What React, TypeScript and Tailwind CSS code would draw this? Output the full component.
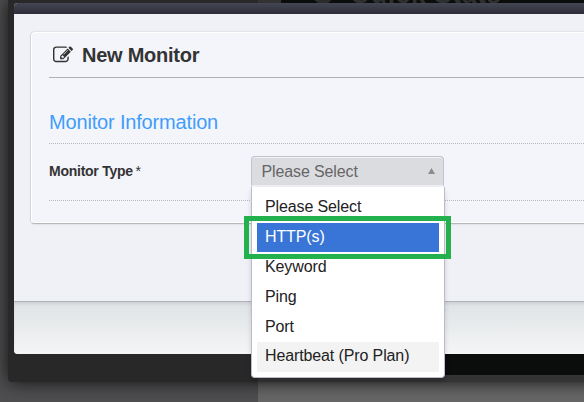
const options = ['Please Select', 'HTTP(s)', 'Keyword', 'Ping', 'Port', 'Heartbeat (Pro Plan)'];

function EditIcon() {
  return (
    <svg viewBox="0 0 1792 1792" className="h-5 w-5 shrink-0" fill="currentColor">
      <path d="M888 1184l116-116-152-152-116 116v56h96v96h56zm440-720q-16-16-33 1l-350 350q-17 17-1 33t33-1l350-350q17-17 1-33zm80 594v190q0 119-84.5 203.5t-203.5 84.5h-832q-119 0-203.5-84.5t-84.5-203.5v-832q0-119 84.5-203.5t203.5-84.5h832q63 0 117 25 15 7 18 23 3 17-9 29l-49 49q-14 14-32 8-23-6-45-6h-832q-66 0-113 47t-47 113v832q0 66 47 113t113 47h832q66 0 113-47t47-113v-126q0-13 9-22l64-64q15-15 35-7t20 29zm-96-738l288 288-672 672h-288v-288zm444 132l-92 92-288-288 92-92q28-28 68-28t68 28l152 152q28 28 28 68t-28 68z" />
    </svg>
  );
}

function Backdrop() {
  return (
    <div className="absolute inset-0 flex">
      <div className="w-[258px] bg-[#4e4e50]" />
      <div className="flex-1 bg-[#666]" />
    </div>
  );
}

function FrameBehind() {
  return (
    <div className="absolute inset-0 overflow-hidden rounded-bl-[4px]">
      <div className="absolute top-0 left-[250px] h-3 w-[23px] bg-[#333]" />
      <div className="absolute top-0 right-0 left-[273px] h-3 overflow-hidden bg-[#0a0d0b]">
        <div className="absolute -top-[18px] left-[31px] h-[22px] w-[22px] rounded-full bg-[#2c2c2c]" />
        <div className="absolute -top-[21px] left-[69px] text-[26px] leading-[30px] font-bold tracking-[0.8px] whitespace-nowrap text-[#303030]">
          Quick Stats
        </div>
      </div>
      <div className="absolute top-[354px] right-0 bottom-[7px] left-[250px] bg-[#0a0d0b]" />
      <div className="absolute right-0 bottom-0 left-[250px] h-[7px] bg-[#333]" />
    </div>
  );
}

function Dropdown() {
  return (
    <div className="absolute top-0 left-0 z-10 w-[194px] text-base leading-[30px] text-[#222]">
      <div className="flex h-[31px] w-[193px] items-center justify-between rounded-t-[4px] border border-b-2 border-[#c2c3cf] border-b-[#eeeff4] bg-[#dbdce0] pr-[8px] pl-[9.5px] text-[#666] shadow-[inset_0_1px_0_#f2f2f5]">
        <span className="relative top-px tracking-[-0.12px]">Please Select</span>
        <svg viewBox="0 0 7 6" className="h-[6px] w-[7px]" fill="#8c8c8c">
          <path d="M3.5 0L7 6H0z" />
        </svg>
      </div>
      <ul className="h-[191px] rounded-b-[4px] border border-t-0 border-[#bbbccb] bg-white px-[5px] pt-[5px] tracking-[-0.12px] shadow-[0_4px_5px_rgba(0,0,0,0.15)]">
        {options.map((o, i) => (
          <li
            key={o}
            className={
              i === 1
                ? 'mt-px h-[29px] bg-[#3875d7] pl-[8px] leading-[27px] text-white'
                : i === 5
                  ? 'h-[30px] bg-[#f3f3f3] pl-[8px] leading-[27px]'
                  : i === 0
                    ? 'h-[30px] pl-[8px] leading-[29px]'
                    : i === 4
                      ? 'h-[30px] pl-[8px] leading-[29px]'
                      : 'h-[30px] pl-[8px] leading-[29px]'
            }
          >
            {o}
          </li>
        ))}
      </ul>
      <div className="absolute top-[60px] -left-[7px] h-[43px] w-[207px] border-[5px] border-[#22b14c]" />
    </div>
  );
}

export default function App() {
  return (
    <div className="relative h-[402px] w-[584px] overflow-hidden font-['Liberation_Sans',Arial,sans-serif]">
      <Backdrop />
      <div className="relative -mr-[30px] ml-[8px] h-[382px] rounded-bl-[4px] bg-[#282828] pt-[3px] pl-[6px] shadow-[0_0_18px_rgba(0,0,0,0.8)]">
        <FrameBehind />
        <main className="relative flex h-[351px] flex-col rounded-l-[4px] bg-[#f0f1f6]">
          <div className="h-[11px] shrink-0 rounded-tl-[4px] bg-linear-to-b from-[#444653] to-[#2d2e39]" />
          <div className="h-[287px] shrink-0 pt-[18px] pl-[17px]">
            <section className="h-[192px] rounded-l-[4px] border border-r-0 border-[#b7b8bc] border-t-white border-l-white bg-[#f4f5fa] pl-[17px] shadow-[-1px_0_0_#d5d6db,0_0_2px_rgba(0,0,0,0.2),inset_0_-1px_0_#fff]">
              <header className="flex h-[45px] items-center gap-[9px] border-b border-[#b1b1b4] pl-[4px] text-[#333]">
                <EditIcon />
                <h1 className="text-[20px] leading-6 font-bold tracking-[-0.25px]">New Monitor</h1>
              </header>
              <h2 className="h-[66px] border-b border-dotted border-[#b9b9bd] pt-[32px] text-[20px] leading-6 tracking-[-0.17px] text-[#3f9dfb]">
                Monitor Information
              </h2>
              <div className="relative flex h-[57px] border-b border-dotted border-[#b9b9bd]">
                <div className="w-[202px] shrink-0 pt-[18px] text-[14px] leading-[18px] font-bold tracking-[-0.25px] text-[#333]">
                  Monitor Type <span className="-ml-px text-[14px] font-normal">*</span>
                </div>
                <div className="relative mt-[12px] w-[194px]">
                  <Dropdown />
                </div>
              </div>
            </section>
          </div>
          <footer className="flex-1 rounded-bl-[4px] border-t border-[#b0b3b8] bg-linear-to-b from-[#dfe3e5] to-[#f4f5f6] shadow-[inset_0_2px_3px_rgba(0,0,0,0.08)]" />
        </main>
      </div>
    </div>
  );
}
